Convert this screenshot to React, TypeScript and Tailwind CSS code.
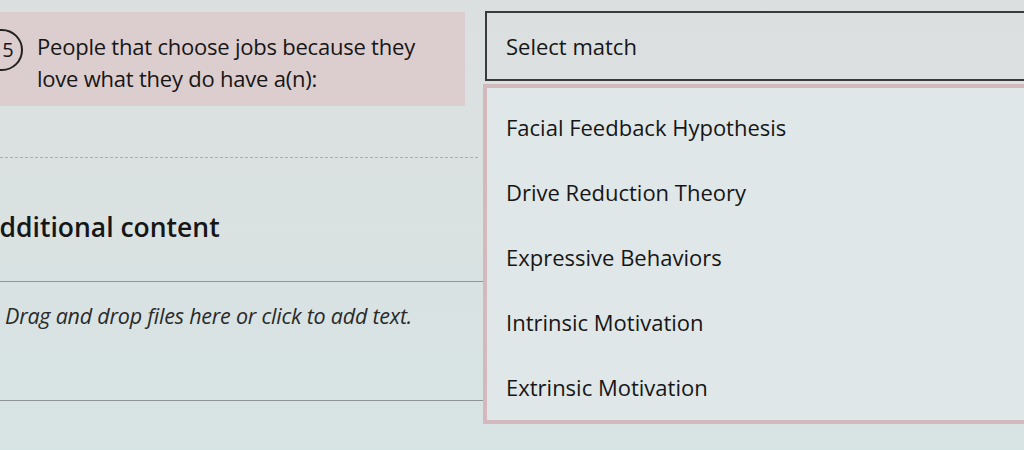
import React from "react";

const options = [
  "Facial Feedback Hypothesis",
  "Drive Reduction Theory",
  "Expressive Behaviors",
  "Intrinsic Motivation",
  "Extrinsic Motivation",
];

export default function App() {
  return (
    <div className="w-[1024px] h-[450px] overflow-hidden flex bg-gradient-to-b from-[#dcdfdf] to-[#d7e4e4] text-[#161616] font-['Open_Sans',sans-serif]">
      {/* Question column */}
      <div className="w-[485px] shrink-0 flex flex-col">
        <div className="mt-[12px] h-[94px] w-[465px] bg-[#dccdce] flex items-start">
          <div className="-ml-[19px] mt-[17px] w-[42px] h-[42px] shrink-0 rounded-full border-2 border-[#222] flex items-center justify-center text-[20px] leading-none">
            <span className="ml-[12px]">5</span>
          </div>
          <p className="ml-[14px] mt-[18px] text-[22px] leading-[32px] tracking-[-0.01em]">
            People that choose jobs because they
            <br />
            love what they do have a(n):
          </p>
        </div>

        <div className="mt-[51px] w-[478px] border-t border-dashed border-[#a8aeb0]" />

        <div className="h-[123px] flex items-center pt-[16px]">
          <h2 className="-ml-[18px] text-[26.5px] font-semibold leading-none">Additional content</h2>
        </div>

        <div className="border-t border-[#8f9596]" />
        <div className="h-[118px] pt-[21px] pl-[5px]">
          <p className="italic text-[21.5px] leading-[26px] tracking-[-0.01em] text-[#2a2a2a]">
            Drag and drop files here or click to add text.
          </p>
        </div>
        <div className="border-t border-[#8f9596]" />
      </div>

      {/* Match column */}
      <div className="w-[570px] shrink-0 flex flex-col">
        <div className="mt-[11px] h-[70px] border-2 border-[#3a3a3a] flex items-center pl-[19px] text-[22px]">
          Select match
        </div>
        <ul className="-ml-[2px] mt-[3px] border-4 border-[#d3b9bb] bg-[#e0e7e8] pt-[7px]">
          {options.map((o) => (
            <li key={o} className="h-[65px] flex items-center pl-[19px] text-[22px]">
              {o}
            </li>
          ))}
        </ul>
      </div>
    </div>
  );
}
